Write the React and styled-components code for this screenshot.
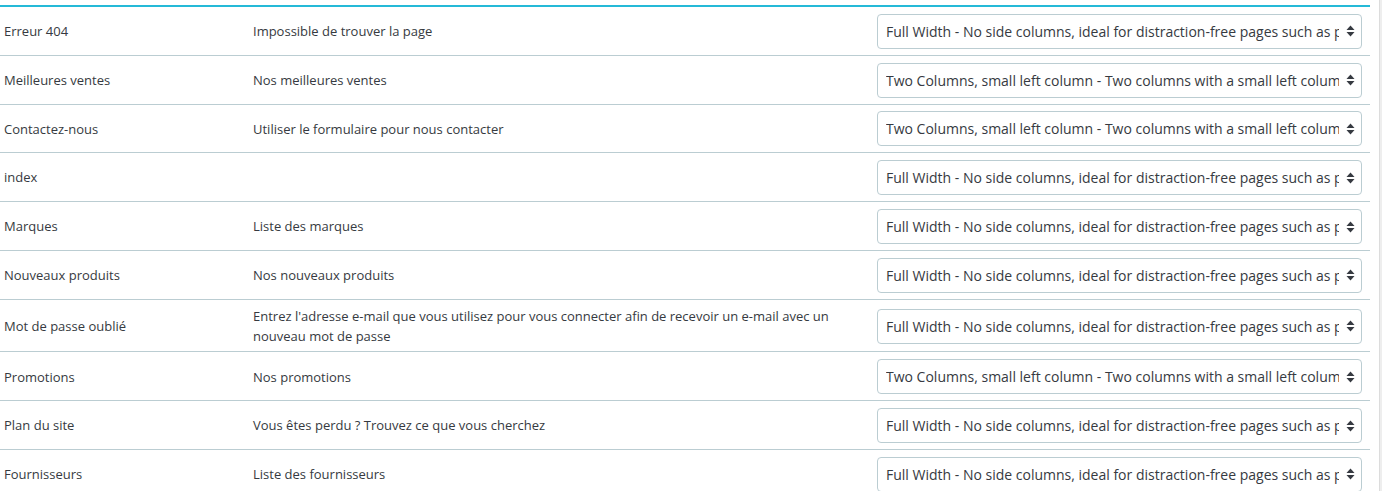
import React from "react";
import styled, { createGlobalStyle } from "styled-components";

const GlobalStyle = createGlobalStyle`
    html, body {
        margin: 0;
        padding: 0;
        background: #fff;
    }
    body {
        font-family: "Open Sans", "Noto Sans", sans-serif;
        color: #363a41;
        overflow: hidden;
    }
`;

const LAYOUTS = {
    full: "Full Width - No side columns, ideal for distraction-free pages such as product pages.",
    left: "Two Columns, small left column - Two columns with a small left column",
};

// pages du thème et leur gabarit
const pages = [
    { name: "Erreur 404", desc: "Impossible de trouver la page", layout: "full" },
    { name: "Meilleures ventes", desc: "Nos meilleures ventes", layout: "left" },
    { name: "Contactez-nous", desc: "Utiliser le formulaire pour nous contacter", layout: "left" },
    { name: "index", desc: "", layout: "full" },
    { name: "Marques", desc: "Liste des marques", layout: "full" },
    { name: "Nouveaux produits", desc: "Nos nouveaux produits", layout: "full" },
    {
        name: "Mot de passe oublié",
        desc: "Entrez l'adresse e-mail que vous utilisez pour vous connecter afin de recevoir un e-mail avec un nouveau mot de passe",
        layout: "full",
    },
    { name: "Promotions", desc: "Nos promotions", layout: "left" },
    { name: "Plan du site", desc: "Vous êtes perdu ? Trouvez ce que vous cherchez", layout: "full" },
    { name: "Fournisseurs", desc: "Liste des fournisseurs", layout: "full" },
];

const SortIcon = () => (
    <svg width="9" height="12" viewBox="0 0 9 12">
        <path d="M4.5 0.5 L8.5 5 L0.5 5 Z" fill="#363a41" />
        <path d="M4.5 11.5 L8.5 7 L0.5 7 Z" fill="#363a41" />
    </svg>
);

const App = () => {
    return (
        <>
            <GlobalStyle />
            <Page>
                <Table>
                    {pages.map((page) => (
                        <Row key={page.name}>
                            <Cell>{page.name}</Cell>
                            <Cell>{page.desc}</Cell>
                            <SelectCell>
                                <SelectWrap>
                                    <Select defaultValue={page.layout}>
                                        <option value="full">{LAYOUTS.full}</option>
                                        <option value="left">{LAYOUTS.left}</option>
                                    </Select>
                                    <Arrow>
                                        <SortIcon />
                                    </Arrow>
                                </SelectWrap>
                            </SelectCell>
                        </Row>
                    ))}
                </Table>
                <SideRail />
            </Page>
        </>
    );
};

export default App;

const Page = styled.div`
    display: flex;
    align-items: stretch;
    height: 491px;
    overflow: hidden;
`;

const Table = styled.div`
    width: 1370px;
    margin-top: 5px;
    border-top: 2px solid #25b9d7;
    flex-shrink: 0;
`;

const Row = styled.div`
    display: grid;
    grid-template-columns: 249px 620px 501px;
    border-bottom: 1px solid #bbcdd2;
`;

const Cell = styled.div`
    display: flex;
    align-items: center;
    padding: 7.4px 4px 5.4px;
    font-size: 13px;
    line-height: 19.5px;
`;

const SelectCell = styled.div`
    display: flex;
    align-items: center;
    padding: 6.9px 8px 5.9px;
`;

const SelectWrap = styled.div`
    position: relative;
    width: 100%;
`;

const Select = styled.select`
    appearance: none;
    -webkit-appearance: none;
    display: block;
    width: 100%;
    height: 35px;
    padding: 0 22px 0 8px;
    border: 1px solid #bbcdd2;
    border-radius: 4px;
    background: #fff;
    font-family: "Open Sans", sans-serif;
    font-size: 14px;
    color: #363a41;
    outline: none;
`;

const Arrow = styled.span`
    position: absolute;
    right: 7px;
    top: 50%;
    transform: translateY(-50%);
    display: flex;
    pointer-events: none;
`;

const SideRail = styled.div`
    margin-left: 9px;
    width: 3px;
    border-left: 1px solid #dcdcdc;
    background: #eeeeee;
`;
